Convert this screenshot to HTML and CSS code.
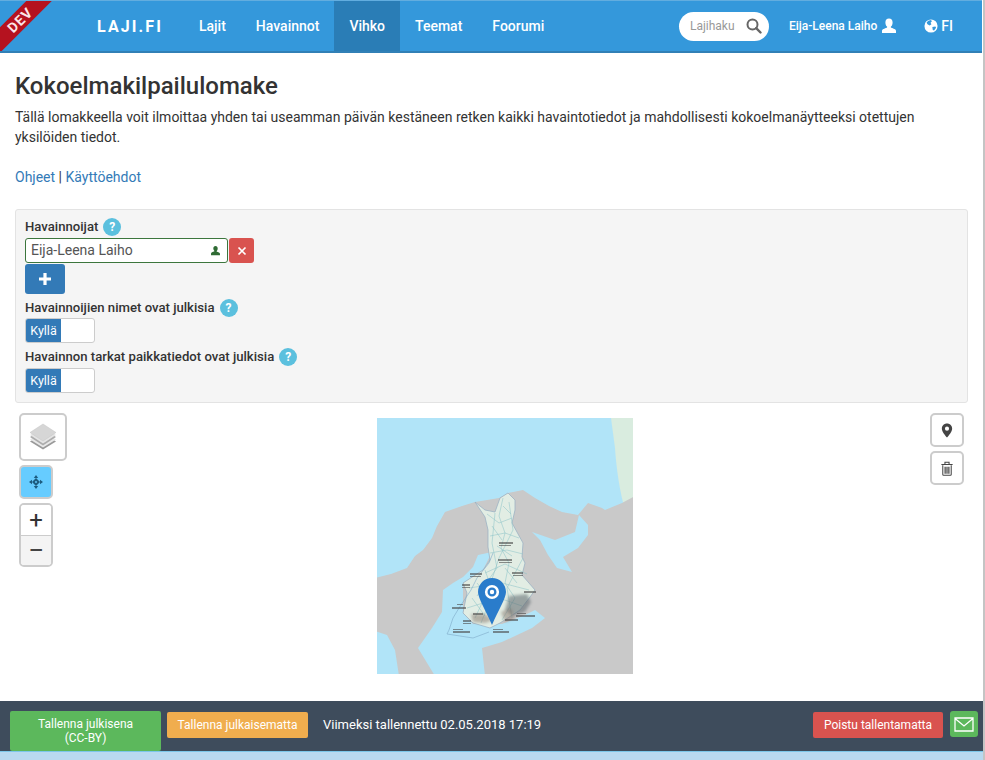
FILE: index.html
```html
<!DOCTYPE html>
<html lang="fi">
<head>
<meta charset="utf-8">
<title>Kokoelmakilpailulomake</title>
<link rel="stylesheet" href="styles.css">
</head>
<body>
<div class="app">
  <header class="navbar">
    <div class="ribbon"><span>DEV</span></div>
    <a class="brand">LAJI.FI</a>
    <nav class="nav-links">
      <a class="nav-link">Lajit</a>
      <a class="nav-link">Havainnot</a>
      <a class="nav-link active">Vihko</a>
      <a class="nav-link">Teemat</a>
      <a class="nav-link">Foorumi</a>
    </nav>
    <div class="nav-right">
      <div class="search">
        <span class="search-text">Lajihaku</span>
        <svg class="search-icon" viewBox="0 0 16 16"><circle cx="6.5" cy="6.5" r="5" fill="none" stroke="#666" stroke-width="2"/><path d="M10.200 10.200l4.300 4.300" stroke="#666" stroke-width="2.400" stroke-linecap="round"/></svg>
      </div>
      <a class="user">Eija-Leena Laiho
        <svg class="user-icon" viewBox="0 0 16 16"><path fill="#fff" d="M8 0.500c2.300 0 3.600 1.700 3.600 3.900 0 1.700-.7 3.300-1.600 4.200-.3.400-.2 1 .3 1.200 2 .8 4.700 1.400 4.700 3.200V15H1v-2c0-1.800 2.700-2.400 4.700-3.200.5-.2.600-.8.300-1.200C5.100 7.700 4.400 6.100 4.400 4.400 4.400 2.200 5.700.5 8 .5z"/></svg>
      </a>
      <a class="lang">
        <svg class="globe" viewBox="0 0 16 16"><circle cx="8" cy="8" r="7.500" fill="#fff"/><path fill="#3498db" d="M5 2l3-.8 1 1.500-1.500 1.700 1 1.500-2 1.500-2.500-1.500-1-2zM9.500 9l3.500-.5.800 1.500-2.300 3.200-1.500-.5z"/></svg>
        FI
      </a>
    </div>
  </header>

  <main class="content">
    <h1 class="title">Kokoelmakilpailulomake</h1>
    <p class="intro">Tällä lomakkeella voit ilmoittaa yhden tai useamman päivän kestäneen retken kaikki havaintotiedot ja mahdollisesti kokoelmanäytteeksi otettujen yksilöiden tiedot.</p>
    <p class="links"><a>Ohjeet</a> | <a>Käyttöehdot</a></p>

    <section class="panel">
      <div class="label-row"><label>Havainnoijat</label><span class="help">?</span></div>
      <div class="observer-row">
        <div class="observer-input">
          <span class="observer-name">Eija-Leena Laiho</span>
          <svg class="ok-user" viewBox="0 0 16 16"><path fill="#2f6b34" d="M8 1.500c2 0 3.200 1.500 3.200 3.500 0 1.500-.6 2.900-1.400 3.700-.3.400-.2.900.3 1.100 1.800.7 4.400 1.200 4.400 2.900V15H1.500v-2.800c0-1.700 2.600-2.200 4.400-2.900.5-.2.600-.7.300-1.100C5.400 7.400 4.800 6 4.800 5c0-2 1.200-3.500 3.200-3.500z"/></svg>
        </div>
        <button class="btn-remove" type="button"><svg viewBox="0 0 10 10"><path d="M1.500 1.500l7 7M8.500 1.500l-7 7" stroke="#fff" stroke-width="1.700" fill="none"/></svg></button>
      </div>
      <button class="btn-add" type="button"><svg viewBox="0 0 14 14"><path d="M7 1v12M1 7h12" stroke="#fff" stroke-width="3.200"/></svg></button>
      <div class="label-row second"><label>Havainnoijien nimet ovat julkisia</label><span class="help">?</span></div>
      <div class="toggle"><span class="toggle-on">Kyllä</span></div>
      <div class="label-row third"><label>Havainnon tarkat paikkatiedot ovat julkisia</label><span class="help">?</span></div>
      <div class="toggle last"><span class="toggle-on">Kyllä</span></div>
    </section>

    <section class="map">
      <svg class="map-image" viewBox="0 0 256 256">
        <defs>
          <filter id="soft" x="-5%" y="-5%" width="110%" height="110%"><feGaussianBlur stdDeviation=".5"/></filter>
          <filter id="softer" x="-30%" y="-30%" width="160%" height="160%"><feGaussianBlur stdDeviation="1.500"/></filter>
          <filter id="label" x="-30%" y="-80%" width="160%" height="260%"><feGaussianBlur stdDeviation=".35"/></filter>
        </defs>
        <rect width="256" height="256" fill="#b1e4f8"/>
        <g filter="url(#soft)">
          <path fill="#d9ecdf" d="M234 0H258V116C246 96 240 60 238 30z"/>
          <path fill="#c9c9c9" d="M-2 160L14 156 30 150 38 138 46 132 55 120 60 108 68 94 85 88 98 84 122 80 131 75 146 72 158 80 172 88 185 94 201 97 211 85 225 90 228 92 245 85 258 78V258H-2z"/>
          <path fill="#b1e4f8" d="M115 134L101 137 96 149 86 159 76 165 66 172 65 194 55 210 41 230 58 258H108L105 230 125 224 155 210 168 200 158 192 148 197 125 206 96 206 86 195 86 165 106 152z"/>
          <path fill="#b1e4f8" d="M202 97L211 107 211 117 201 130 186 139 195 154 180 150 171 137 163 122 155 114 178 122 198 114z"/>
          <path fill="#b1e4f8" d="M-2 213L10 217 18 232 22 258H-2z"/>
          <path fill="#b1e4f8" d="M64 240L70 243 66 250 62 248z"/>
          <path fill="#e2ede4" stroke="#95aec2" stroke-width=".7" d="M98 84L108 92 118 94 123 80 131 75 138 82 138 92 135 105 146 125 145 139 148 145 145 157 158 172 153 179 143 192 123 205 113 210 96 205 86 195 90 175 86 165 106 152 113 142 111 129 111 112 108 99z"/>
        </g>
        <g fill="none" stroke="#8fc4c8" stroke-width=".55" filter="url(#label)">
          <path d="M126 80L122 98 128 115 124 130 132 145 128 165 138 180 125 202"/>
          <path d="M110 96L122 105 135 100M113 118L128 115 142 120M113 135L130 132 146 136M108 155L128 146 150 156M92 170L125 165 152 172M90 190L122 180 145 188M104 205L116 175 108 152"/>
          <path d="M132 84L136 112 122 140 112 170 98 200M118 95L115 125 120 150 100 178M146 140L130 170 135 200"/>
          <path d="M126 88L134 96M115 108L125 122M120 128L135 138M128 150L140 165M100 165L112 180M95 180L108 198"/>
        </g>
        <path fill="none" stroke="#7eaac8" stroke-width=".6" d="M116 135L112 145 100 160 94 172 82 190 76 200 72 212 70 216 96 220 112 214"/>
        <path fill="#5c666c" opacity=".55" filter="url(#softer)" d="M132 178L150 176 154 184 148 194 136 198 128 192z"/>
        <path fill="#86766a" opacity=".5" filter="url(#softer)" d="M94 196L108 196 116 202 108 205 96 204zM124 194L134 190 138 200 128 204z"/>
        <g fill="#4a4a4a" opacity=".6" filter="url(#label)">
          <rect x="122" y="124" width="14" height="2"/><rect x="122" y="127" width="12" height="1"/>
          <rect x="121" y="141" width="14" height="2"/><rect x="122" y="144" width="13" height="1"/>
          <rect x="135" y="154" width="11" height="2"/><rect x="136" y="157" width="10" height="1"/>
          <rect x="147" y="173" width="12" height="2"/>
          <rect x="93" y="155" width="12" height="2"/><rect x="93" y="158" width="11" height="1"/>
          <rect x="85" y="166" width="8" height="2"/><rect x="85" y="169" width="8" height="1"/>
          <rect x="75" y="189" width="14" height="2"/><rect x="80" y="186" width="6" height="1"/>
          <rect x="140" y="195" width="9" height="1"/><rect x="139" y="197" width="19" height="2"/>
          <rect x="86" y="202" width="8" height="2"/><rect x="86" y="205" width="8" height="1"/>
          <rect x="76" y="211" width="10" height="1"/><rect x="76" y="213" width="17" height="2"/>
          <rect x="116" y="211" width="10" height="1"/><rect x="116" y="213" width="16" height="2"/>
          <rect x="128" y="201" width="13" height="2"/>
          <rect x="96" y="195" width="10" height="2"/>
        </g>
      </svg>
      <svg class="map-marker" viewBox="0 0 28 47">
        <path fill="#2a7ccb" d="M14 0C6.200 0 0 6.200 0 14c0 6 8 19 14 33C20 33 28 20 28 14 28 6.200 21.800 0 14 0z"/>
        <circle cx="14" cy="14" r="5.800" fill="none" stroke="#fff" stroke-width="2.600"/>
        <circle cx="14" cy="14" r="2.200" fill="#fff"/>
      </svg>
      <div class="map-tools-left">
        <button class="map-layers" type="button">
          <svg viewBox="0 0 28 28"><path fill="#9a9a9a" d="M14 10L27 18.500 14 26.500 1 18.500z"/><path fill="#e8e8e8" d="M14 8L27 16.500 14 24.500 1 16.500z"/><path fill="#acacac" d="M14 6L27 14 14 22.500 1 14z"/><path fill="#e4e4e4" d="M14 4L27 12 14 20.500 1 12z"/><path fill="#d6d6d6" stroke="#c4c4c4" stroke-width=".5" d="M14 1L27 9.500 14 18 1 9.500z"/></svg>
        </button>
        <button class="map-locate" type="button">
          <svg viewBox="0 0 14 14"><path fill="#1d5c80" d="M7 0l2.200 3H4.800zM7 14l-2.200-3h4.400zM0 7l3-2.200v4.400zM14 7l-3 2.200V4.800z"/><path fill="#1d5c80" d="M7 3L11 7 7 11 3 7zM7 5.800L5.800 7 7 8.200 8.200 7z" fill-rule="evenodd"/></svg>
        </button>
        <div class="map-zoom">
          <button class="zoom-btn" type="button">+</button>
          <button class="zoom-btn minus" type="button">−</button>
        </div>
      </div>
      <div class="map-tools-right">
        <button class="map-tool" type="button"><svg viewBox="0 0 12 16"><path fill="#444" fill-rule="evenodd" d="M6 .5C2.900.5.500 2.900.500 6c0 3 3.500 7 5.500 9.500C8 13 11.500 9 11.500 6 11.500 2.900 9.100.5 6 .5zM6 3.800a2.200 2.200 0 1 1 0 4.400 2.200 2.200 0 0 1 0-4.400z"/></svg></button>
        <button class="map-tool" type="button"><svg viewBox="0 0 14 16"><path fill="none" stroke="#444" stroke-width="1.100" d="M2.500 4.500V14.500c0 .5.300.8.800.8h7.400c.5 0 .8-.3.800-.8V4.500M1 3.800h12M4.800 3.500V1.300h4.400v2.200"/><path stroke="#444" stroke-width="1.300" d="M5 6v7.500M7 6v7.500M9 6v7.500"/></svg></button>
      </div>
    </section>
  </main>

  <footer class="savebar">
    <button class="btn save-public" type="button">Tallenna julkisena<br>(CC-BY)</button>
    <button class="btn save-private" type="button">Tallenna julkaisematta</button>
    <span class="saved-at">Viimeksi tallennettu 02.05.2018 17:19</span>
    <button class="btn leave" type="button">Poistu tallentamatta</button>
    <button class="btn mail" type="button"><svg viewBox="0 0 20 15"><path fill="none" stroke="#fff" stroke-width="1.300" d="M1 1h18v13H1zM1 1.500l9 7.500 9-7.500"/></svg></button>
  </footer>
  <div class="bottom-strip"></div>
</div>
</body>
</html>
```

FILE: styles.css
```css
* { box-sizing: border-box; }
html, body { margin: 0; height: 100%; overflow: hidden; }
body { background: #fff; font-family: Roboto, "Liberation Sans", sans-serif; font-size: 14px; color: #333; }
.app { width: 100%; height: 760px; display: flex; flex-direction: column; border-right: 2px solid #c4c4c4; }
button { font-family: inherit; border: 0; padding: 0; }

.navbar { position: relative; height: 53px; flex: none; margin-right: 1px; display: flex; align-items: stretch; background: #3498db; border-top: 1px solid #62addf; border-bottom: 2px solid #3180b6; color: #fff; overflow: hidden; }
.ribbon { position: absolute; left: -30px; top: 10px; width: 100px; height: 18px; background: #b5121f; transform: rotate(-45deg); text-align: center; }
.ribbon span { display: block; font-weight: 700; font-size: 14px; line-height: 18px; letter-spacing: 1px; color: #fbe6e8; }
.brand { margin-left: 97px; width: 87px; font-size: 16px; font-weight: 700; letter-spacing: 2.1px; line-height: 52px; }
.nav-links { display: flex; }
.nav-link { padding: 0 15px; font-size: 14px; font-weight: 500; line-height: 50px; }
.nav-link.active { background: #2a7db6; }
.nav-right { margin-left: auto; display: flex; align-items: center; }
.search { width: 90px; height: 29px; margin-right: 20px; padding: 0 7px 0 11px; background: #fff; border-radius: 15px; display: flex; align-items: center; justify-content: space-between; }
.search-text { font-size: 12px; color: #999; }
.search-icon { width: 16px; height: 16px; }
.user { font-size: 12px; font-weight: 500; display: flex; align-items: center; gap: 4px; margin-right: 27px; }
.user-icon { width: 16px; height: 16px; }
.lang { font-size: 14px; font-weight: 500; display: flex; align-items: center; gap: 3px; margin-right: 29px; }
.globe { width: 14px; height: 14px; }

.content { flex: 1; min-height: 0; padding: 0 15px; }
.title { margin: 20px 0 8px; font-size: 24px; font-weight: 500; line-height: 26px; color: #333; }
.intro { margin: 0; font-size: 14px; line-height: 20px; }
.links { margin: 20px 0 0; line-height: 20px; color: #333; }
.links a { color: #337ab7; }

.panel { margin-top: 22px; height: 194px; padding: 8px 9px; background: #f5f5f5; border: 1px solid #e3e3e3; border-radius: 3px; }
.label-row { display: flex; align-items: center; gap: 5px; height: 18px; font-size: 13.15px; line-height: 18px; }
.label-row label { font-weight: 500; color: #333; }
.label-row.second { margin-top: 5px; }
.label-row.third { margin-top: 5px; }
.help { width: 18px; height: 18px; border-radius: 50%; background: #5bc0de; color: #fff; font-weight: 700; font-size: 12px; text-align: center; }
.observer-row { display: flex; gap: 1px; margin-top: 2px; }
.observer-input { width: 203px; height: 25px; padding: 0 5px; display: flex; align-items: center; justify-content: space-between; background: #fff; border: 1px solid #3c763d; border-radius: 3px; font-size: 14px; color: #555; }
.observer-name { margin-top: -2px; }
.ok-user { width: 11px; height: 11px; margin-right: 1px; }
.btn-remove { width: 25px; height: 25px; background: #d9534f; border-radius: 3px; display: flex; align-items: center; justify-content: center; }
.btn-remove svg { width: 10px; height: 10px; }
.btn-add { display: flex; align-items: center; justify-content: center; width: 40px; height: 30px; margin-top: 1px; background: #337ab7; border-radius: 3px; }
.btn-add svg { width: 14px; height: 14px; }
.toggle { width: 70px; height: 25px; margin-top: 1px; background: #fff; border: 1px solid #ccc; border-radius: 3px; overflow: hidden; }
.toggle.last { margin-top: 2px; }
.toggle-on { display: block; width: 35px; height: 23px; background: #337ab7; color: #fff; font-size: 12.5px; line-height: 23px; text-align: center; }

.map { position: relative; height: 256px; margin-top: 15px; display: flex; justify-content: center; }
.map-image { display: block; width: 256px; height: 256px; margin-left: 26px; }
.map-marker { position: absolute; left: 463px; top: 160px; width: 28px; height: 47px; }
.map-tools-left { position: absolute; left: 4px; top: -5px; display: flex; flex-direction: column; align-items: flex-start; }
.map-layers { width: 48px; height: 48px; background: #fff; border: 2px solid #ccc; border-radius: 5px; display: flex; align-items: center; justify-content: center; }
.map-layers svg { width: 28px; height: 28px; }
.map-locate { width: 34px; height: 34px; margin-top: 4px; background: #66ccff; border: 2px solid #ccc; border-radius: 5px; display: flex; align-items: center; justify-content: center; }
.map-locate svg { width: 14px; height: 14px; }
.map-zoom { width: 34px; height: 64px; margin-top: 4px; border: 2px solid #ccc; border-radius: 5px; overflow: hidden; }
.zoom-btn { display: block; width: 100%; height: 30px; background: #fff; color: #333; font-size: 24px; font-weight: 400; line-height: 30px; text-align: center; }
.zoom-btn.minus { background: #f4f4f4; border-top: 1px solid #ccc; color: #444; font-size: 28px; }
.map-tools-right { position: absolute; right: 4px; top: -5px; display: flex; flex-direction: column; gap: 4px; }
.map-tool { width: 34px; height: 34px; background: #fff; border: 2px solid #ccc; border-radius: 5px; display: flex; align-items: center; justify-content: center; }
.map-tool svg { width: 14px; height: 15px; }

.savebar { flex: none; height: 50px; padding-left: 10px; display: flex; align-items: flex-start; background: #3e4c5c; color: #fff; }
.btn { color: #fff; font-size: 12px; line-height: 14px; border-radius: 2px; text-align: center; }
.save-public { width: 151px; height: 40px; margin-top: 10px; background: #5cb85c; }
.save-private { width: 141px; height: 26px; margin: 11px 0 0 6px; background: #f0ad4e; }
.saved-at { margin: 16px 0 0 15px; font-size: 13px; line-height: 16px; }
.leave { width: 130px; height: 26px; margin: 11px 7px 0 auto; background: #d9534f; }
.mail { width: 28px; height: 26px; margin: 10px 5px 0 0; background: #5cb85c; border-radius: 3px; display: flex; align-items: center; justify-content: center; }
.mail svg { width: 20px; height: 15px; }
.bottom-strip { flex: none; height: 9px; background: #b9d9f0; border-top: 1px solid #7cc7ea; }
```
